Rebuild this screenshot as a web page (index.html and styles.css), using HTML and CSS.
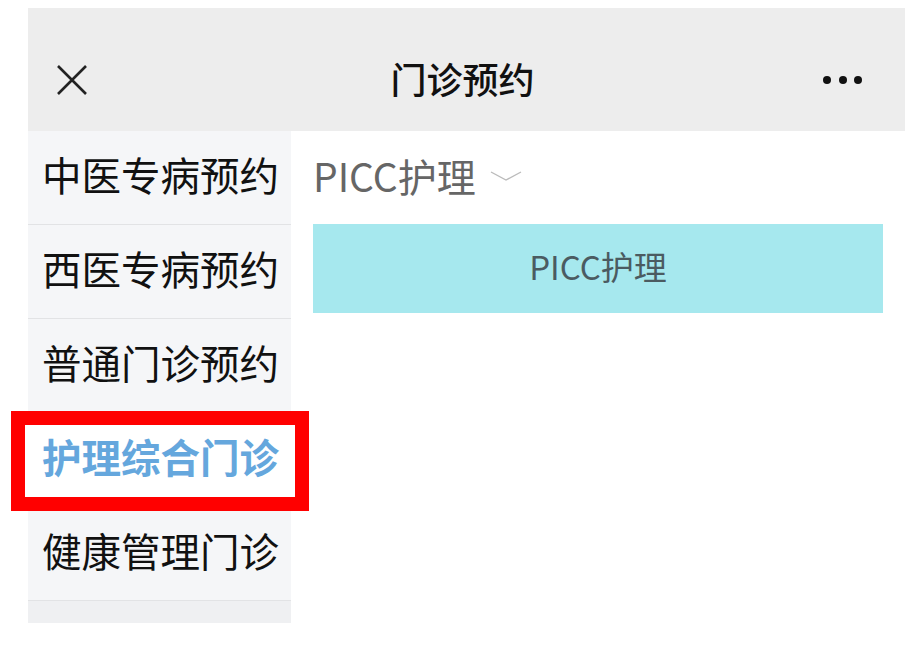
FILE: index.html
```html
<!DOCTYPE html>
<html>
<head>
    <title>门诊预约</title>
    <link rel="stylesheet" href="styles.css">
</head>
<body>
    <div class="phone">
        <!-- Top bar -->
        <div class="top-bar">
            <svg class="close-icon" width="32" height="32" viewBox="0 0 32 32">
                <path d="M2 2 L30 30 M30 2 L2 30" stroke="#222" stroke-width="2.6" fill="none" />
            </svg>
            <div class="title">门诊预约</div>
            <svg class="more-icon" width="42" height="10" viewBox="0 0 42 10">
                <circle cx="5" cy="5" r="4" fill="#111" />
                <circle cx="21" cy="5" r="4" fill="#111" />
                <circle cx="36" cy="5" r="4" fill="#111" />
            </svg>
        </div>

        <div class="main">
            <!-- Category list -->
            <div class="side-menu">
                <div class="menu-item">中医专病预约</div>
                <div class="menu-item">西医专病预约</div>
                <div class="menu-item">普通门诊预约</div>
                <div class="menu-item active">
                    护理综合门诊
                    <div class="mark-box"></div>
                </div>
                <div class="menu-item">健康管理门诊</div>
                <div class="menu-item last"></div>
            </div>

            <!-- Clinic list -->
            <div class="content">
                <div class="group-title">
                    <span>PICC护理</span>
                    <svg class="chevron" width="32" height="10" viewBox="0 0 32 10">
                        <polyline points="1,1 16,9 31,1" stroke="#bbb" stroke-width="1.4" fill="none" />
                    </svg>
                </div>
                <div class="clinic-item">PICC护理</div>
            </div>
        </div>
    </div>
</body>
</html>
```

FILE: styles.css
```css
/* Page */
body {
    margin: 0;
    background-color: #fff;
    font-family: "Noto Sans CJK SC", "Noto Sans", sans-serif;
}
.phone {
    margin: 8px 0 0 28px;
    width: 877px;
    height: 615px;
    display: flex;
    flex-direction: column;
}

/* Top bar */
.top-bar {
    height: 123px;
    box-sizing: border-box;
    flex-shrink: 0;
    background-color: #ededed;
    display: flex;
    align-items: center;
    padding: 20px 41px 0 28px;
}
.title {
    flex: 1;
    text-align: center;
    font-size: 36px;
    font-weight: 500;
    color: #111;
    padding-left: 15px;
    padding-bottom: 4px;
}

/* Main area */
.main {
    flex: 1;
    display: flex;
}
.side-menu {
    width: 263px;
    background-color: #f5f6f8;
    display: flex;
    flex-direction: column;
}
.menu-item {
    height: 94px;
    box-sizing: border-box;
    border-bottom: 1px solid #e2e3e5;
    display: flex;
    align-items: center;
    padding: 0 0 8px 14px;
    font-size: 39.5px;
    color: #111;
    position: relative;
    flex-shrink: 0;
}
.menu-item.active {
    background-color: #fff;
    color: #65a7dd;
    font-weight: bold;
}
.menu-item.last {
    flex: 1;
    height: auto;
    background-color: #eff0f2;
    border-bottom: none;
}
.mark-box {
    position: absolute;
    left: -17px;
    top: -2px;
    width: 270px;
    height: 72px;
    border: 14px solid #ff0000;
}

/* Content */
.content {
    flex: 1;
    background-color: #fff;
    padding: 0 22px;
}
.group-title {
    height: 93px;
    box-sizing: border-box;
    display: flex;
    align-items: center;
    padding-bottom: 6px;
    font-size: 39px;
    color: #666;
}
.chevron {
    margin-left: 14px;
    margin-top: 2px;
}
.clinic-item {
    height: 89px;
    box-sizing: border-box;
    background-color: #a6e8ee;
    display: flex;
    align-items: center;
    justify-content: center;
    padding-bottom: 6px;
    font-size: 33px;
    color: #4b5b61;
}
```
